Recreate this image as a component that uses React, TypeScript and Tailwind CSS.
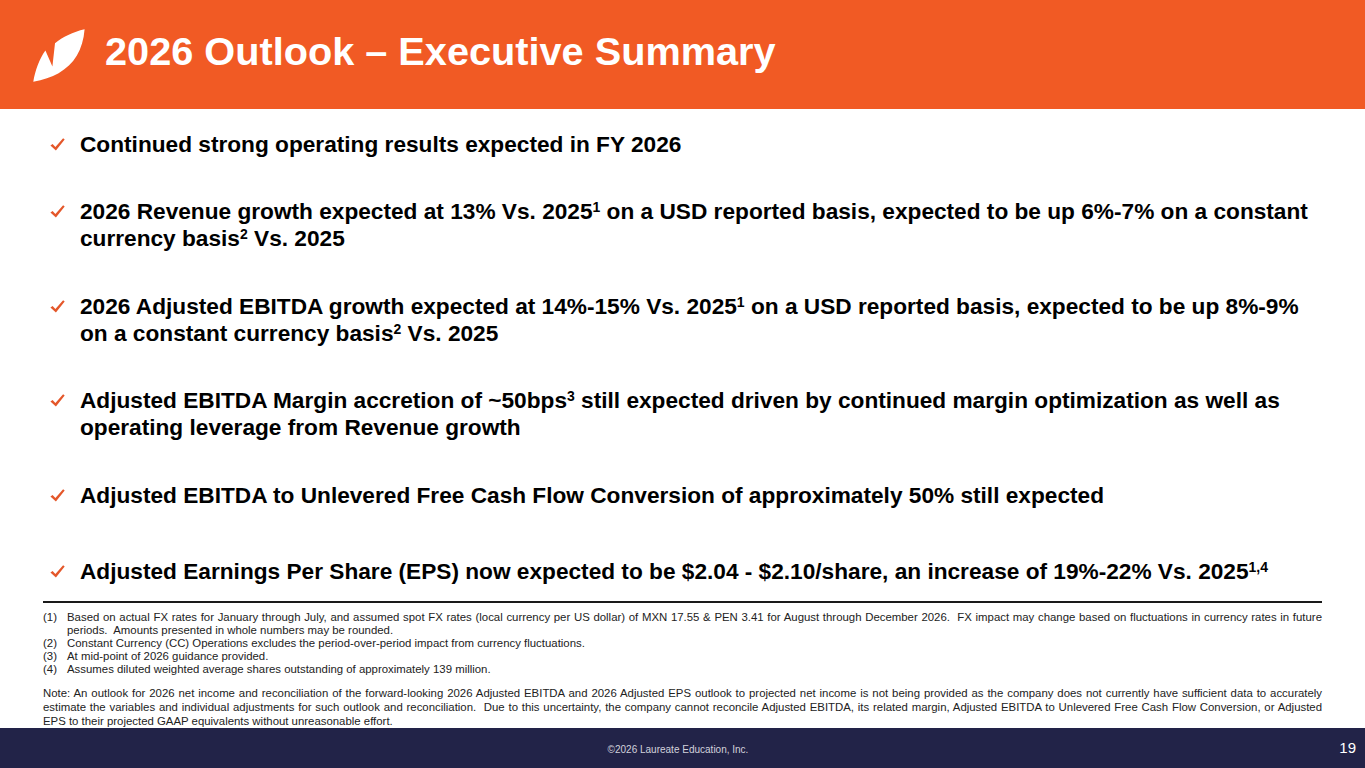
import React from "react";

const Check = () => (
  <svg width="15" height="13" viewBox="0 0 15 13" className="block">
    <path d="M0.4 7.4 L2.6 5.9 L5.4 9.0 L13.1 0.2 L14.7 1.4 L5.9 12.6 Z" fill="#E4572A" />
  </svg>
);

const Logo = () => (
  <svg width="52" height="53" viewBox="0 0 52 53" className="block shrink-0">
    <path
      d="M51.6 0.3 C40 3 29.5 8 22 14.2 L19.4 37.4 L12.4 21.6 C6.2 30 2.2 42 0.3 52.7 C10 51 18.5 48 25.6 44.2 C41 35.5 50 21 51.6 0.3 Z"
      fill="#ffffff"
    />
  </svg>
);

const Sup = ({ children }: { children: React.ReactNode }) => (
  <sup className="text-[14px]">{children}</sup>
);

const Bullet = ({ lines, className = "" }: { lines: React.ReactNode[]; className?: string }) => (
  <div className={"flex " + className}>
    <div className="w-[30px] shrink-0 pt-[7px]">
      <Check />
    </div>
    <div className="text-[22.67px] leading-[27px] font-bold text-black">
      {lines.map((l, i) => (
        <div key={i} className="whitespace-nowrap">
          {l}
        </div>
      ))}
    </div>
  </div>
);

const Foot = ({ n, text }: { n: string; text: string }) => (
  <div className="flex">
    <div className="w-[24px] shrink-0">{n}</div>
    <div className="flex-1 text-justify">{text}</div>
  </div>
);

const foot1 =
  "Based on actual FX rates for January through July, and assumed spot FX rates (local currency per US dollar) of MXN 17.55 & PEN 3.41 for August through December 2026.\u00a0 FX impact may change based on fluctuations in currency rates in future periods.\u00a0 Amounts presented in whole numbers may be rounded.";

const note =
  "Note: An outlook for 2026 net income and reconciliation of the forward-looking 2026 Adjusted EBITDA and 2026 Adjusted EPS outlook to projected net income is not being provided as the company does not currently have sufficient data to accurately estimate the variables and individual adjustments for such outlook and reconciliation.\u00a0 Due to this uncertainty, the company cannot reconcile Adjusted EBITDA, its related margin, Adjusted EBITDA to Unlevered Free Cash Flow Conversion, or Adjusted EPS to their projected GAAP equivalents without unreasonable effort.";

export default function App() {
  return (
    <div
      className="w-[1365px] h-[768px] flex flex-col bg-white overflow-hidden"
      style={{ fontFamily: '"Liberation Sans", Arial, sans-serif' }}
    >
      <header className="h-[109px] shrink-0 bg-[#F15A24] flex items-start pl-[33px] pt-[29px]">
        <Logo />
        <h1 className="ml-[20px] text-[39.7px] leading-[45px] font-bold text-white whitespace-nowrap">
          2026 Outlook – Executive Summary
        </h1>
      </header>

      <main className="flex-1 flex flex-col pt-[22px]">
        <div className="pl-[50px]">
          <Bullet lines={["Continued strong operating results expected in FY 2026"]} />
          <Bullet
            className="mt-[40px]"
            lines={[
              <>
                2026 Revenue growth expected at 13% Vs. 2025<Sup>1</Sup> on a USD reported basis, expected to be up 6%-7% on a constant
              </>,
              <>
                currency basis<Sup>2</Sup> Vs. 2025
              </>,
            ]}
          />
          <Bullet
            className="mt-[41px]"
            lines={[
              <>
                2026 Adjusted EBITDA growth expected at 14%-15% Vs. 2025<Sup>1</Sup> on a USD reported basis, expected to be up 8%-9%
              </>,
              <>
                on a constant currency basis<Sup>2</Sup> Vs. 2025
              </>,
            ]}
          />
          <Bullet
            className="mt-[40px]"
            lines={[
              <>
                Adjusted EBITDA Margin accretion of ~50bps<Sup>3</Sup> still expected driven by continued margin optimization as well as
              </>,
              <>operating leverage from Revenue growth</>,
            ]}
          />
          <Bullet
            className="mt-[41px]"
            lines={["Adjusted EBITDA to Unlevered Free Cash Flow Conversion of approximately 50% still expected"]}
          />
          <Bullet
            className="mt-[49px]"
            lines={[
              <>
                Adjusted Earnings Per Share (EPS) now expected to be $2.04 - $2.10/share, an increase of 19%-22% Vs. 2025<Sup>1,4</Sup>
              </>,
            ]}
          />
        </div>

        <div className="pl-[43px] pr-[43px]">
          <div className="mt-[16px] h-[2px] bg-[#1a1a1a]" />

          <div className="mt-[8px] text-[11.4px] leading-[13.1px] text-[#222]">
            <Foot n="(1)" text={foot1} />
            <Foot
              n="(2)"
              text="Constant Currency (CC) Operations excludes the period-over-period impact from currency fluctuations."
            />
            <Foot n="(3)" text="At mid-point of 2026 guidance provided." />
            <Foot n="(4)" text="Assumes diluted weighted average shares outstanding of approximately 139 million." />
          </div>

          <p className="mt-[10px] text-[11.4px] leading-[14px] text-[#222] text-justify">{note}</p>
        </div>
      </main>

      <footer className="h-[40px] shrink-0 bg-[#222348] grid grid-cols-[1fr_auto_1fr] items-center pr-[9px]">
        <div />
        <div className="text-[10px] text-[#d2d2dc] pt-[2px]">©2026 Laureate Education, Inc.</div>
        <div className="justify-self-end text-[15px] text-white">19</div>
      </footer>
    </div>
  );
}
